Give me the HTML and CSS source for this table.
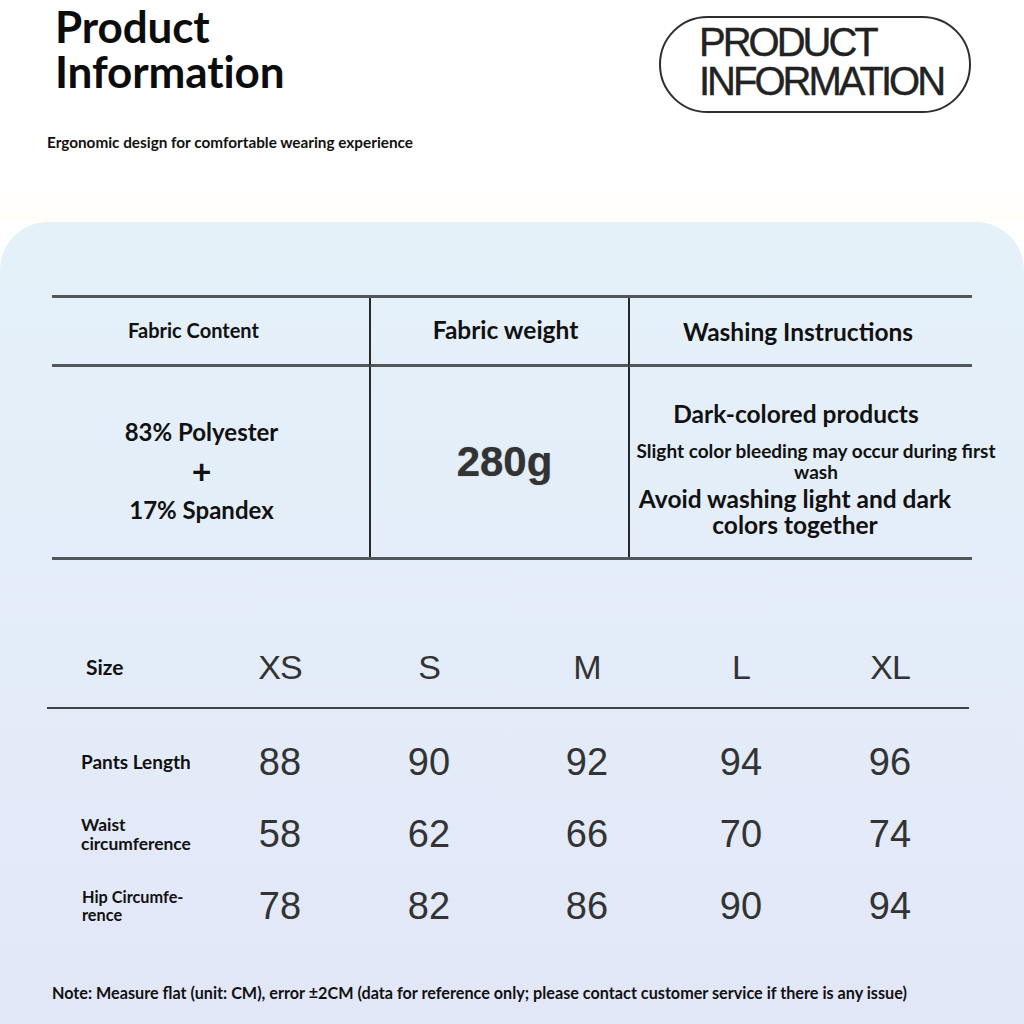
FILE: index.html
```html
<!DOCTYPE html>
<html lang="en">
<head>
<meta charset="utf-8">
<title>Product Information</title>
<link rel="stylesheet" href="styles.css">
</head>
<body>
<div class="page">
  <header class="header">
    <div class="intro">
      <h1 class="title">Product<br>Information</h1>
      <p class="subtitle">Ergonomic design for comfortable wearing experience</p>
    </div>
    <div class="badge">PRODUCT<br>INFORMATION</div>
  </header>

  <main class="panel">
    <section class="spec">
      <div class="cell head head-content">Fabric Content</div>
      <div class="cell head head-weight line-left">Fabric weight</div>
      <div class="cell head head-wash line-left">Washing Instructions</div>

      <div class="cell body body-content">
        <p class="fab">83% Polyester</p>
        <p class="fab plus">+</p>
        <p class="fab">17% Spandex</p>
      </div>
      <div class="cell body body-weight line-left">280g</div>
      <div class="cell body body-wash line-left">
        <p class="wash-title">Dark-colored products</p>
        <p class="wash-note">Slight color bleeding may occur during first wash</p>
        <p class="wash-tip">Avoid washing light and dark colors together</p>
      </div>
    </section>

    <section class="sizes">
      <div class="srow srow-head">
        <div class="slabel slabel-size">Size</div>
        <div class="sval sletter">XS</div>
        <div class="sval sletter">S</div>
        <div class="sval sletter">M</div>
        <div class="sval sletter">L</div>
        <div class="sval sletter">XL</div>
      </div>
      <div class="srow">
        <div class="slabel">Pants Length</div>
        <div class="sval">88</div>
        <div class="sval">90</div>
        <div class="sval">92</div>
        <div class="sval">94</div>
        <div class="sval">96</div>
      </div>
      <div class="srow">
        <div class="slabel slabel-two">Waist<br>circumference</div>
        <div class="sval">58</div>
        <div class="sval">62</div>
        <div class="sval">66</div>
        <div class="sval">70</div>
        <div class="sval">74</div>
      </div>
      <div class="srow">
        <div class="slabel slabel-hip">Hip Circumfe-<br>rence</div>
        <div class="sval">78</div>
        <div class="sval">82</div>
        <div class="sval">86</div>
        <div class="sval">90</div>
        <div class="sval">94</div>
      </div>
    </section>

    <p class="note">Note: Measure flat (unit: CM), error ±2CM (data for reference only; please contact customer service if there is any issue)</p>
  </main>
</div>
</body>
</html>
```
FILE: styles.css
```css
* { box-sizing: border-box; }
html, body { margin: 0; padding: 0; }
body {
  width: 1024px;
  height: 1024px;
  overflow: hidden;
  background: #ffffff;
  font-family: "Lato", "Noto Sans", sans-serif;
  color: #111;
}
p { margin: 0; }

.page { width: 1024px; height: 1024px; display: flex; flex-direction: column; }

/* header */
.header {
  height: 222px;
  flex: none;
  display: flex;
  justify-content: space-between;
  align-items: flex-start;
  padding-left: 47px;
  background: linear-gradient(#ffffff 0%, #ffffff 85%, #fffdf8 100%);
}
.intro { padding-top: 4px; }
.title {
  margin: 0 0 0 8px;
  font-size: 44px;
  line-height: 45px;
  font-weight: 700;
  color: #0c0c0c;
  letter-spacing: -0.1px;
}
.subtitle {
  margin-top: 39px;
  font-size: 15.3px;
  line-height: 18px;
  font-weight: 700;
  color: #111;
}
.badge {
  margin: 16px 53px 0 0;
  width: 312px;
  height: 97px;
  border: 2px solid #2e2e2e;
  border-radius: 50px;
  padding: 5px 0 0 38px;
  font-family: "Liberation Sans", Arial, sans-serif;
  font-size: 40px;
  line-height: 39px;
  letter-spacing: -3px;
  color: #222;
  -webkit-text-stroke: 0.4px #222;
}

/* panel */
.panel {
  flex: 1;
  border-radius: 48px 48px 0 0;
  background: linear-gradient(180deg, #e5f1f9 0%, #e4edf9 45%, #e2e7f8 100%);
  padding-top: 73px;
}

.spec {
  margin-left: 52px;
  width: 920px;
  display: grid;
  grid-template-columns: 317px 259px 344px;
  grid-template-rows: 69px 190px;
  border-top: 3px solid #52575b;
  border-bottom: 3px solid #52575b;
}
.cell { display: flex; flex-direction: column; align-items: center; }
.line-left { border-left: 2px solid #26292b; }
.head {
  justify-content: center;
  border-bottom: 3px solid #52575b;
  font-weight: 700;
  color: #111;
  padding-bottom: 3px;
}
.head-content { font-size: 20px; padding-right: 34px; }
.head-weight { font-size: 24.5px; padding-left: 12px; }
.head-wash { font-size: 24.5px; padding-top: 4px; padding-right: 6px; }

.body-content { padding-top: 45px; padding-right: 18px; }
.fab { font-size: 24px; line-height: 39px; font-weight: 700; }
.plus { font-size: 34px; }

.body-weight {
  justify-content: center;
  padding-left: 10px;
  font-family: "Liberation Sans", Arial, sans-serif;
  font-weight: 700;
  font-size: 42px;
  color: #333;
  text-shadow: 0 0 1px rgba(40,40,40,0.5);
}

.body-wash {
  align-items: flex-start;
  padding-top: 33px;
  overflow: visible;
}
.wash-title {
  width: 300px;
  margin-left: 16px;
  text-align: center;
  font-size: 24.5px;
  line-height: 28px;
  font-weight: 700;
}
.wash-note {
  width: 372px;
  margin-top: 12px;
  text-align: center;
  font-size: 19px;
  line-height: 21px;
  font-weight: 700;
}
.wash-tip {
  width: 330px;
  margin-top: 4px;
  text-align: center;
  font-size: 24.5px;
  line-height: 26px;
  font-weight: 700;
}

/* sizes */
.sizes {
  margin: 77px 0 0 47px;
  width: 922px;
}
.srow {
  display: grid;
  grid-template-columns: 158px 150px 148px 168px 140px 158px;
  height: 72px;
  align-items: center;
}
.srow-head {
  height: 72px;
  padding-bottom: 10px;
  border-bottom: 2px solid #3f4347;
  margin-bottom: 17px;
}
.slabel {
  padding-left: 34px;
  font-size: 19px;
  line-height: 20px;
  font-weight: 700;
  color: #111;
}
.slabel-size { padding-left: 39px; font-size: 21px; }
.slabel-two { font-size: 17.4px; line-height: 19px; }
.slabel-hip { font-size: 16.3px; line-height: 18px; padding-left: 35px; }
.sval {
  text-align: center;
  font-family: "Liberation Sans", Arial, sans-serif;
  font-size: 38px;
  color: #333;
}
.sletter { font-size: 34px; letter-spacing: -1px; }

.note {
  margin: 42px 0 0 52px;
  font-size: 16.2px;
  line-height: 18px;
  font-weight: 700;
  color: #111;
}
```
